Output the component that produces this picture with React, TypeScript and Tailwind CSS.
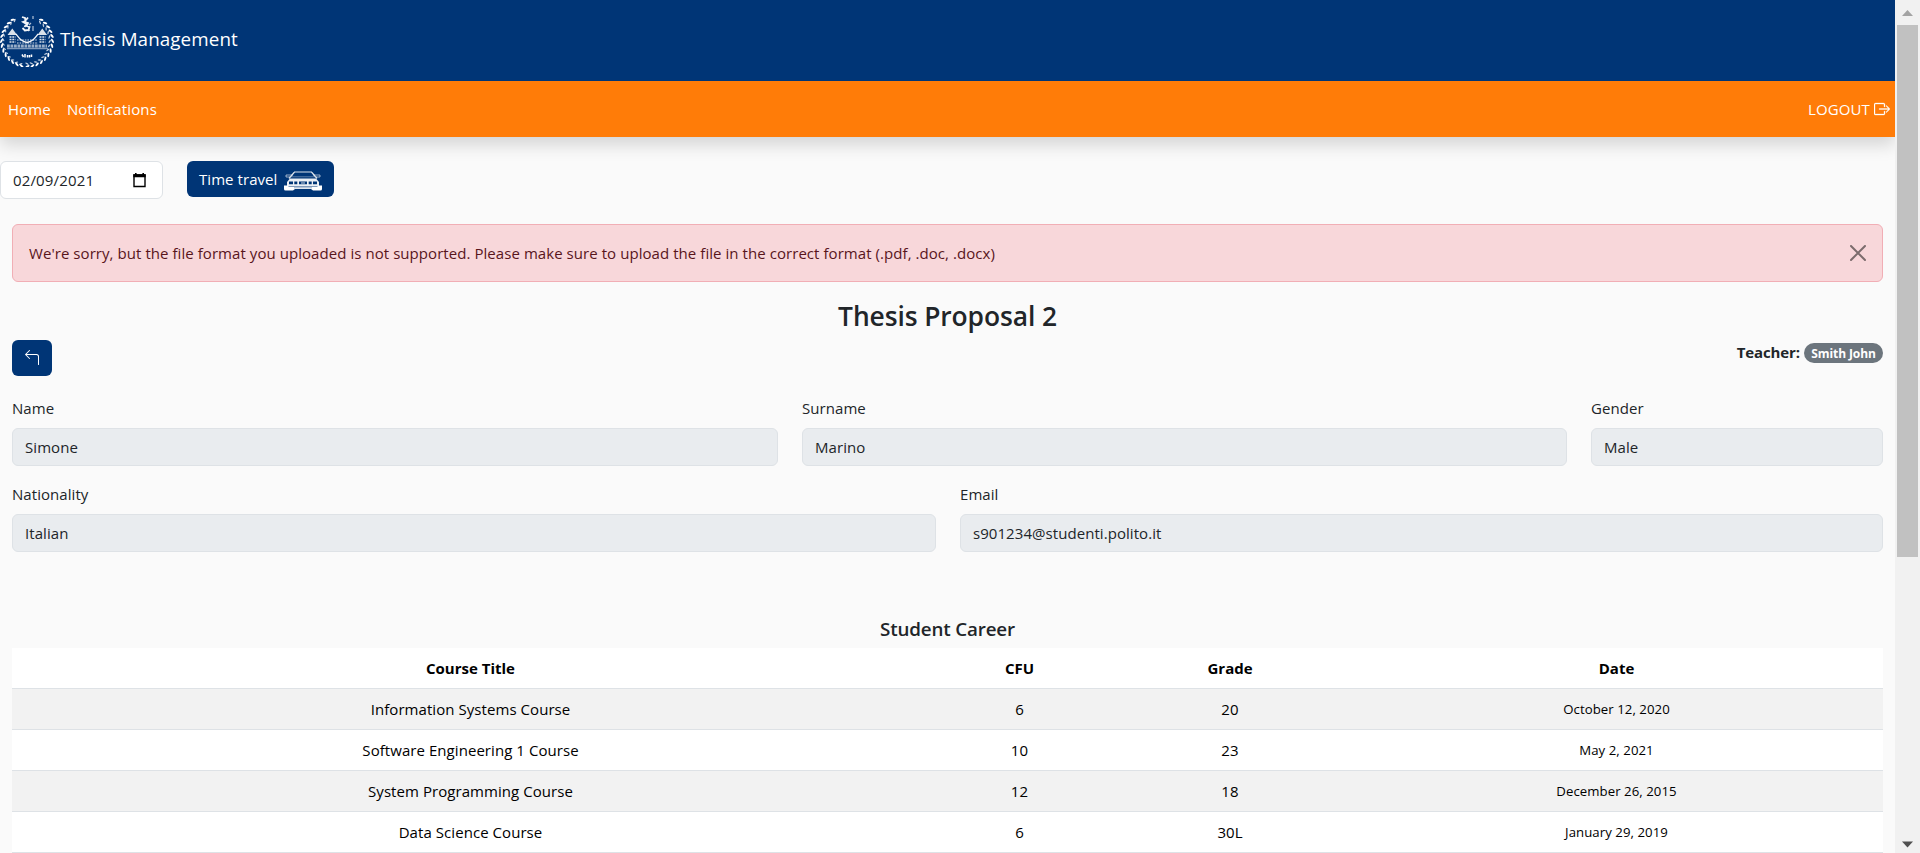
import React from "react";
import { BsBoxArrowRight, BsArrow90DegLeft } from "react-icons/bs";

const leaves = Array.from({ length: 27 }, (_, i) => {
  const deg = -55 + (i * 290) / 26;
  return { deg, side: i < 13.5 ? 1 : -1 };
});

function Seal() {
  return (
    <svg width="54" height="52" viewBox="0 0 54 52" fill="none" stroke="#fff">
      {leaves.map(({ deg, side }) => (
        <g key={deg} transform={`translate(27 26) rotate(${deg}) translate(24.600 0)`} stroke="none" fill="#fff">
          <ellipse cx="1" cy="0" rx="1" ry="2.300" transform={`rotate(${-28 * side})`} />
          <ellipse cx="-1.600" cy="1" rx=".7" ry="1.900" transform={`rotate(${32 * side})`} opacity=".75" />
        </g>
      ))}
      <path d="M22 2l3 1 .5 3-2.500 1 3.500 2-2 3M26 5l2-2.500M25 7l3 1-1.500 3 3 1-1 3-4 .5M22.500 13l3 3" strokeWidth="1.800" opacity=".95" />
      <path d="M33 1v3M31 8l-2 2M33 11v5M30 15l-2 1" strokeWidth="1.200" opacity=".7" />
      <path d="M7.500 20l4.800-6.500 4.800 6.500zM37.500 20l4.800-6.500 4.800 6.500z" fill="#fff" stroke="none" opacity=".85" />
      <path d="M9.500 22h6M9.500 24.500h6M9.500 27h6M39.500 22h6M39.500 24.500h6M39.500 27h6" strokeWidth="1.400" strokeDasharray="2 .8" opacity=".85" />
      <path d="M16 19c3 4 5 7 11 8.500 6-1.500 8-4.500 11-8.500" strokeWidth="1.300" opacity=".95" />
      <path d="M17 25h20M17 28h21" strokeWidth="1.300" strokeDasharray="1.600 1" opacity=".55" />
      <path d="M7 31h40" strokeWidth="3" strokeDasharray="2.800 .7" opacity=".6" />
      <path d="M7 33.600h41" strokeWidth="1.500" opacity=".5" />
      <path d="M22 39.500l1.500 2.500M25 39v3.500M27.500 40v2.500M29.500 40v2.500M31.500 39.500v2.500" strokeWidth="1.500" />
    </svg>
  );
}

function Car() {
  return (
    <svg width="38" height="20" viewBox="0 0 38 20" fill="none" stroke="#fff">
      <path d="M10 1h18M10.500 1L5 7.500M27.500 1L33 7.500" strokeWidth="1.200" opacity=".85" />
      <path d="M2 4h7M29 4h7M2 6h4M32 6h4M2 4v2M36 4v2" strokeWidth=".9" opacity=".65" />
      <path d="M7 5.800h24" strokeWidth=".8" opacity=".45" />
      <path d="M6 7.500h26l3 3.500v4H3v-4z" fill="#fff" stroke="none" opacity=".92" />
      <path d="M5 10.600h4v2.600H5zM10.300 10.600h3v2.600h-3zM24.700 10.600h3v2.600h-3zM29 10.600h4v2.600h-4zM15 10.600h8v2.600h-8z" fill="#003576" stroke="none" />
      <path d="M17 12h4" strokeWidth="1" opacity=".8" />
      <path d="M0 14.500h3l2 1h28l2-1h3V18q0 1.500-1.500 1.500H29L27 18H11l-2 1.500H1.500Q0 19.500 0 18z" fill="#fff" stroke="none" />
      <path d="M10 16.800h18" stroke="#003576" strokeWidth=".6" opacity=".7" />
    </svg>
  );
}

function CalendarIcon() {
  return (
    <svg width="13" height="15" viewBox="0 0 13 15" fill="none" stroke="#000">
      <path d="M1 2h11v11.500H1z" strokeWidth="1.400" />
      <path d="M.3 1.300h12.400v3H.3zM2 0h1.600v2H2zM9.400 0H11v2H9.400z" fill="#000" stroke="none" />
    </svg>
  );
}

function CloseIcon() {
  return (
    <svg width="16" height="16" viewBox="0 0 16 16" fill="none" stroke="#7c6c6d" strokeWidth="2" strokeLinecap="round">
      <path d="M1 1l14 14M15 1L1 15" />
    </svg>
  );
}

function Field({ label, value, className }: { label: string; value: string; className: string }) {
  return (
    <div className={className}>
      <div className="mb-2 h-6 leading-6">{label}</div>
      <div className="h-[38px] rounded-md border border-[#dee2e6] bg-[#e9ecef] px-3 leading-[36px]">{value}</div>
    </div>
  );
}

const courses = [
  ["Information Systems Course", "6", "20", "October 12, 2020"],
  ["Software Engineering 1 Course", "10", "23", "May 2, 2021"],
  ["System Programming Course", "12", "18", "December 26, 2015"],
  ["Data Science Course", "6", "30L", "January 29, 2019"],
];

export default function App() {
  return (
    <div className="flex h-[853px] w-full overflow-hidden bg-[#fafafa] font-['Open_Sans','Noto_Sans',sans-serif] text-[15px] leading-6 tracking-[0.06px] text-[#212529]">
      <div className="w-[1895px] shrink-0 overflow-hidden">
        <header className="shadow-[0_8px_16px_rgba(0,0,0,0.15)]">
          <div className="flex h-[81px] items-center bg-[#003576] text-white">
            <Seal />
            <span className="ml-[6px] pb-[3px] text-[18.8px] tracking-[0.1px]">Thesis Management</span>
          </div>
          <nav className="flex h-14 items-center bg-[#ff7c08] tracking-[0.13px] text-white">
            <a className="pl-2">Home</a>
            <a className="pl-4">Notifications</a>
            <a className="ml-auto flex items-center gap-1 pr-[5px]">
              LOGOUT <BsBoxArrowRight size={16} strokeWidth={0.3} />
            </a>
          </nav>
        </header>

        <div className="mt-6 flex h-[38px] items-start">
          <div className="flex h-[38px] w-[163px] items-center justify-between rounded-md border border-[#dee2e6] bg-white pl-3 pr-4">
            <span className="tracking-[0.15px]">02/09/2021</span>
            <CalendarIcon />
          </div>
          <button className="ml-6 flex h-9 w-[147px] items-center justify-between rounded-md bg-[#003576] px-3 text-white">
            <span>Time travel</span>
            <span className="pt-[3px]">
              <Car />
            </span>
          </button>
        </div>

        <main className="mt-[25px] px-3">
          <div className="flex h-[58px] items-center justify-between rounded-md border border-[#f1aeb5] bg-[#f8d7da] px-4 text-[#58151c]">
            <span>
              We're sorry, but the file format you uploaded is not supported. Please make sure to upload the file in the correct format (.pdf, .doc, .docx)
            </span>
            <CloseIcon />
          </div>

          <h1 className="mt-[18px] h-8 text-center text-[26.400px] font-semibold leading-8 tracking-[-0.1px]">Thesis Proposal 2</h1>
          <div className="mt-2 flex h-9 items-start justify-between">
            <button className="flex h-9 w-10 items-center justify-center rounded-md bg-[#003576] text-white">
              <BsArrow90DegLeft size={16} />
            </button>
            <div className="flex items-center gap-1 font-bold tracking-normal">
              <span className="tracking-[-0.1px]">Teacher:</span>
              <span className="mt-[2px] flex h-5 w-[79px] items-center justify-center rounded-full bg-[#6c757d] pt-px text-[12px] tracking-[-0.1px] text-white">
                Smith John
              </span>
            </div>
          </div>

          <div className="mt-5 flex gap-6">
            <Field label="Name" value="Simone" className="w-[766px]" />
            <Field label="Surname" value="Marino" className="w-[765px]" />
            <Field label="Gender" value="Male" className="w-[292px]" />
          </div>
          <div className="mt-4 flex gap-6">
            <Field label="Nationality" value="Italian" className="w-[924px]" />
            <Field label="Email" value="s901234@studenti.polito.it" className="w-[923px]" />
          </div>

          <h2 className="mt-[65px] h-6 text-center text-[18.800px] font-semibold leading-6 tracking-[-0.15px]">Student Career</h2>
          <table className="mt-[7px] w-full table-fixed border-separate border-spacing-0 bg-white text-center text-black">
            <colgroup>
              <col className="w-[917px]" />
              <col className="w-[181px]" />
              <col className="w-[240px]" />
              <col className="w-[533px]" />
            </colgroup>
            <thead>
              <tr className="h-[41px] font-bold tracking-normal">
                <th className="border-b border-[#dee2e6] p-0">Course Title</th>
                <th className="border-b border-[#dee2e6] p-0">CFU</th>
                <th className="border-b border-[#dee2e6] p-0">Grade</th>
                <th className="border-b border-[#dee2e6] p-0">Date</th>
              </tr>
            </thead>
            <tbody>
              {courses.map(([title, cfu, grade, date]) => (
                <tr key={title} className="h-[41px] odd:bg-[#f2f2f2]">
                  <td className="border-b border-[#dee2e6] p-0">{title}</td>
                  <td className="border-b border-[#dee2e6] p-0">{cfu}</td>
                  <td className="border-b border-[#dee2e6] p-0">{grade}</td>
                  <td className="border-b border-[#dee2e6] p-0 text-[13.200px]">{date}</td>
                </tr>
              ))}
            </tbody>
          </table>
        </main>
      </div>

      <div className="flex w-[25px] shrink-0 flex-col items-center bg-[#f1f1f1]">
        <svg width="25" height="25" viewBox="0 0 25 25" fill="#a3a3a3">
          <path d="M12.500 10l5.500 6H7z" />
        </svg>
        <div className="h-[532px] w-[21px] bg-[#c1c1c1]" />
        <svg className="mt-auto" width="25" height="20" viewBox="0 0 25 20" fill="#505050">
          <path d="M12.500 14.500L7 8.500h11z" />
        </svg>
      </div>
    </div>
  );
}
